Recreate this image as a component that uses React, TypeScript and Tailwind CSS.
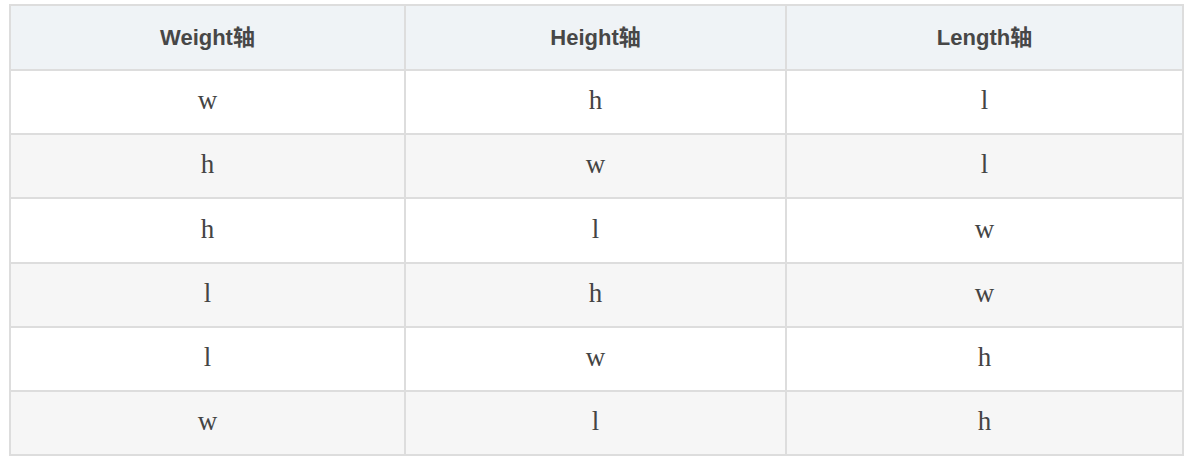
import React from "react";

const rows: string[][] = [
  ["w", "h", "l"],
  ["h", "w", "l"],
  ["h", "l", "w"],
  ["l", "h", "w"],
  ["l", "w", "h"],
  ["w", "l", "h"],
];
const heights = ["h-[62px]", "h-[62px]", "h-[63px]", "h-[62px]", "h-[62px]", "h-[62px]"];

export default function App() {
  return (
    <div className="w-[1190px] h-[458px] bg-white pt-[4px] pl-[9px]">
      <div className="grid grid-cols-[393px_379px_395px] gap-[2px] p-[2px] bg-[#dddddd] w-[1175px]">
        {["Weight轴", "Height轴", "Length轴"].map((h) => (
          <div
            key={h}
            className="h-[63px] bg-[#eff3f6] flex items-center justify-center text-[22px] font-bold text-[#474747] pb-[1px]"
            style={{ fontFamily: '"Liberation Sans", Arial, "Noto Sans CJK SC", sans-serif' }}
          >
            {h}
          </div>
        ))}
        {rows.map((r, i) =>
          r.map((c, j) => (
            <div
              key={`${i}-${j}`}
              className={`${heights[i]} ${i % 2 === 1 ? "bg-[#f6f6f6]" : "bg-white"} flex items-center justify-center text-[27px] text-[#444444] pb-[3px]`}
              style={{ fontFamily: '"Liberation Serif", "Times New Roman", serif' }}
            >
              {c}
            </div>
          ))
        )}
      </div>
    </div>
  );
}
